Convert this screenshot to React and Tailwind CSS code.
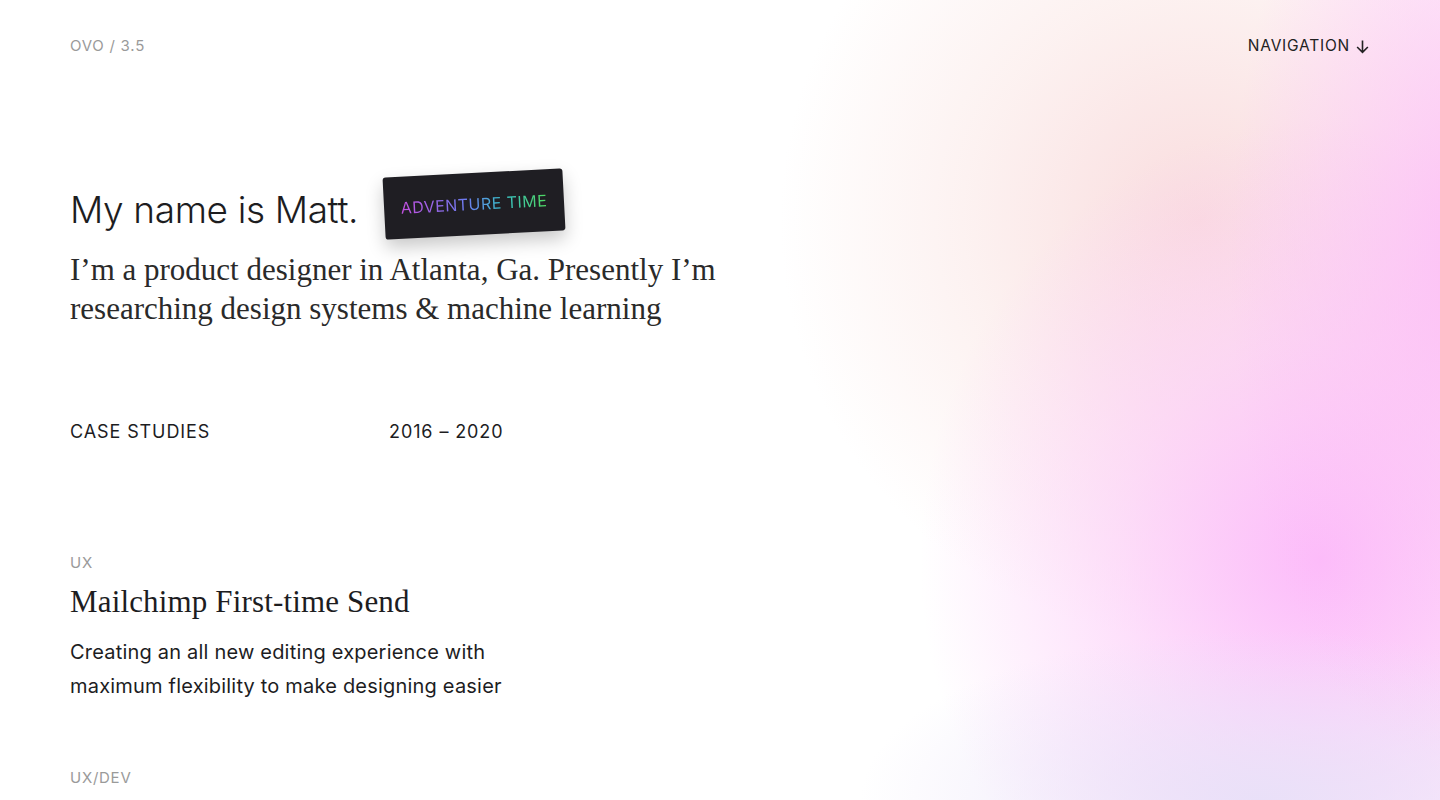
export default function App() {
  return (
    <div className="relative w-full h-[800px] overflow-hidden bg-white" style={{ fontFamily: 'Inter, "Open Sans", sans-serif' }}>
      <div className="pointer-events-none absolute inset-0">
        <div className="absolute inset-0 bg-[radial-gradient(ellipse_420px_420px_at_1200px_220px,rgba(249,218,220,0.95),rgba(250,228,226,0.5)_55%,rgba(255,255,255,0)_100%)]" />
        <div className="absolute inset-0 bg-[radial-gradient(ellipse_400px_440px_at_1320px_560px,rgba(252,186,250,0.98),rgba(252,202,248,0.6)_50%,rgba(255,255,255,0)_100%)]" />
        <div className="absolute inset-0 bg-[radial-gradient(ellipse_240px_520px_at_1470px_260px,rgba(252,188,246,0.9),rgba(255,255,255,0)_100%)]" />
        <div className="absolute inset-0 bg-[radial-gradient(ellipse_400px_170px_at_1260px_800px,rgba(232,224,248,0.95),rgba(255,255,255,0)_100%)]" />
      </div>

      <div className="relative px-[70px]">
        <header className="flex items-center justify-between pt-[36px] h-[56px]">
          <span className="text-[15px] tracking-[0.05em] text-[#9a9a9a]">OVO / 3.5</span>
          <span className="flex items-center gap-[5px] text-[15.5px] tracking-[0.05em] text-[#222]">
            NAVIGATION
            <svg width="15" height="15" viewBox="0 0 14 14" fill="none" stroke="#222" strokeWidth="1.5">
              <path d="M7 1.5v11M2 7.5l5 5 5-5" />
            </svg>
          </span>
        </header>

        <section className="pt-[129px]">
          <div className="flex items-center">
            <h1 className="text-[37px] font-light text-[#1d1d1f] leading-[46px] tracking-[-0.01em]">My name is Matt.</h1>
            <div className="relative ml-[26px] -mt-[12px] w-[180px] h-[62px] bg-[#1f1e23] rounded-[3px] rotate-[-3deg] shadow-[0_8px_18px_rgba(0,0,0,0.22)] flex items-center justify-center">
              <span className="text-[16px] tracking-[0.03em] bg-[linear-gradient(90deg,#c44fe0,#6c7cf0_45%,#38c0c8_70%,#4fd860)] bg-clip-text text-transparent">ADVENTURE TIME</span>
            </div>
          </div>
          <p className="mt-[15px] text-[31px] leading-[39px] text-[#2a2a2a] w-[720px]" style={{ fontFamily: '"Liberation Serif", "DejaVu Serif", serif' }}>
            I’m a product designer in Atlanta, Ga. Presently I’m researching design systems &amp; machine learning
          </p>
        </section>

        <section className="mt-[90px] flex text-[18px] tracking-[0.05em] text-[#1d1d1f]">
          <span className="w-[319px]">CASE STUDIES</span>
          <span>2016 – 2020</span>
        </section>

        <section className="mt-[107px]">
          <div className="text-[15px] text-[#9a9a9a] tracking-[0.05em]">UX</div>
          <h2 className="mt-[9px] text-[31px] leading-[36px] tracking-[0.005em] text-[#1d1d1f]" style={{ fontFamily: '"Liberation Serif", "DejaVu Serif", serif' }}>
            Mailchimp First-time Send
          </h2>
          <p className="mt-[15px] text-[20px] leading-[34px] tracking-[0.01em] text-[#1d1d1f] w-[470px]">
            Creating an all new editing experience with maximum flexibility to make designing easier
          </p>
        </section>

        <section className="mt-[64px]">
          <div className="text-[15px] text-[#9a9a9a] tracking-[0.05em]">UX/DEV</div>
        </section>
      </div>
    </div>
  );
}
